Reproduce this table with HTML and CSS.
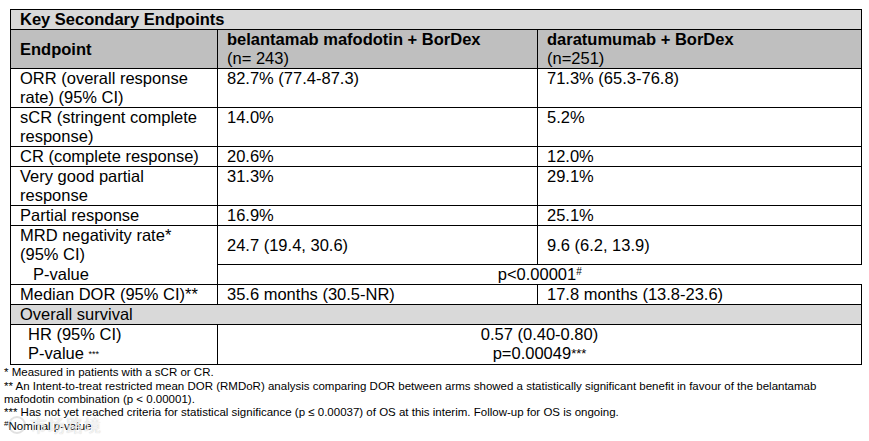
FILE: index.html
```html
<!DOCTYPE html>
<html lang="en">
<head>
<meta charset="utf-8">
<title>Key Secondary Endpoints</title>
<link rel="stylesheet" href="styles.css">
</head>
<body>
<div class="page">
  <table class="endpoints">
    <colgroup>
      <col class="c1">
      <col class="c2">
      <col class="c3">
    </colgroup>
    <tr class="title-row">
      <th colspan="3">Key Secondary Endpoints</th>
    </tr>
    <tr class="head-row">
      <th class="mid">Endpoint</th>
      <th>belantamab mafodotin + BorDex<br><span class="n">(n= 243)</span></th>
      <th>daratumumab + BorDex<br><span class="n">(n=251)</span></th>
    </tr>
    <tr>
      <td>ORR (overall response rate) (95% CI)</td>
      <td>82.7% (77.4-87.3)</td>
      <td>71.3% (65.3-76.8)</td>
    </tr>
    <tr>
      <td>sCR (stringent complete response)</td>
      <td>14.0%</td>
      <td>5.2%</td>
    </tr>
    <tr>
      <td>CR (complete response)</td>
      <td>20.6%</td>
      <td>12.0%</td>
    </tr>
    <tr>
      <td>Very good partial response</td>
      <td>31.3%</td>
      <td>29.1%</td>
    </tr>
    <tr>
      <td>Partial response</td>
      <td>16.9%</td>
      <td>25.1%</td>
    </tr>
    <tr class="mrd-row">
      <td rowspan="2" class="mrd-label">MRD negativity rate*<br>(95% CI)<br><span class="indent-p">P-value</span></td>
      <td class="mid">24.7 (19.4, 30.6)</td>
      <td class="mid">9.6 (6.2, 13.9)</td>
    </tr>
    <tr>
      <td colspan="2" class="center open-right">p&lt;0.00001<sup class="sm">#</sup></td>
    </tr>
    <tr>
      <td>Median DOR (95% CI)**</td>
      <td>35.6 months (30.5-NR)</td>
      <td>17.8 months (13.8-23.6)</td>
    </tr>
    <tr class="section-row">
      <td colspan="3">Overall survival</td>
    </tr>
    <tr>
      <td><span class="indent-h">HR (95% CI)</span><br><span class="indent-h">P-value <span class="tiny">***</span></span></td>
      <td colspan="2" class="center">0.57 (0.40-0.80)<br>p=0.00049<span class="ast">***</span></td>
    </tr>
  </table>

  <div class="notes">
    <p>* Measured in patients with a sCR or CR.</p>
    <p>** An Intent-to-treat restricted mean DOR (RMDoR) analysis comparing DOR between arms showed a statistically significant benefit in favour of the belantamab<br>mafodotin combination (p &lt; 0.00001).</p>
    <p>*** Has not yet reached criteria for statistical significance (p ≤ 0.00037) of OS at this interim. Follow-up for OS is ongoing.</p>
    <p><sup class="hash">#</sup>Nominal p-value</p>
  </div>

  <div class="watermark"><span class="wm-logo"></span>市场路境</div>
</div>
</body>
</html>
```

FILE: styles.css
```css
html, body {
  margin: 0;
  padding: 0;
  background: #ffffff;
}

body {
  font-family: "Liberation Sans", Arial, sans-serif;
  color: #000000;
}

.page {
  position: relative;
  width: 869px;
  height: 441px;
  overflow: hidden;
}

.endpoints {
  border-collapse: collapse;
  table-layout: fixed;
  width: 851px;
  margin: 9px 0 0 10px;
  font-size: 16.5px;
  line-height: 19px;
}

.c1 { width: 207px; }
.c2 { width: 320px; }
.c3 { width: 324px; }

.endpoints th,
.endpoints td {
  border: 1px solid #000000;
  padding: 0 6px 0 9px;
  text-align: left;
  vertical-align: top;
}

.endpoints th {
  font-weight: bold;
}

.title-row th {
  background: #d9d9d9;
}

.head-row th {
  background: #bfbfbf;
}

.head-row th.mid {
  vertical-align: middle;
}

.n {
  font-weight: normal;
}

.endpoints td.mid {
  vertical-align: middle;
}

.mrd-row td.mid {
  height: 38px;
}

.endpoints td.mrd-label {
  line-height: 19.4px;
}

.endpoints td.center {
  text-align: center;
  padding-left: 0;
  padding-right: 0;
}

.endpoints td.open-right {
  border-right: none;
}

.section-row td {
  background: #d9d9d9;
}

.indent-p {
  padding-left: 13px;
}

.indent-h {
  padding-left: 8px;
}

.sm {
  font-size: 10px;
  line-height: 0;
  vertical-align: 5px;
}

.tiny {
  font-size: 9px;
  vertical-align: 2px;
}

.ast {
  font-size: 13px;
  vertical-align: 1px;
}

.notes {
  margin-top: 1px;
  padding-left: 4px;
  font-size: 11.5px;
  line-height: 13.4px;
}

.notes p {
  margin: 0;
}

.hash {
  font-size: 8px;
  line-height: 0;
  vertical-align: 4px;
}

.watermark {
  position: absolute;
  left: 8px;
  top: 414px;
  font-family: "Noto Sans CJK SC", sans-serif;
  font-size: 17px;
  line-height: 22px;
  color: rgba(255, 255, 255, 0.75);
  text-shadow: 0 0 1px rgba(120, 120, 120, 0.45);
  letter-spacing: 1px;
  display: flex;
  align-items: center;
  gap: 4px;
}

.wm-logo {
  width: 14px;
  height: 14px;
  border-radius: 50%;
  border: 2px solid rgba(170, 170, 170, 0.35);
}
```
